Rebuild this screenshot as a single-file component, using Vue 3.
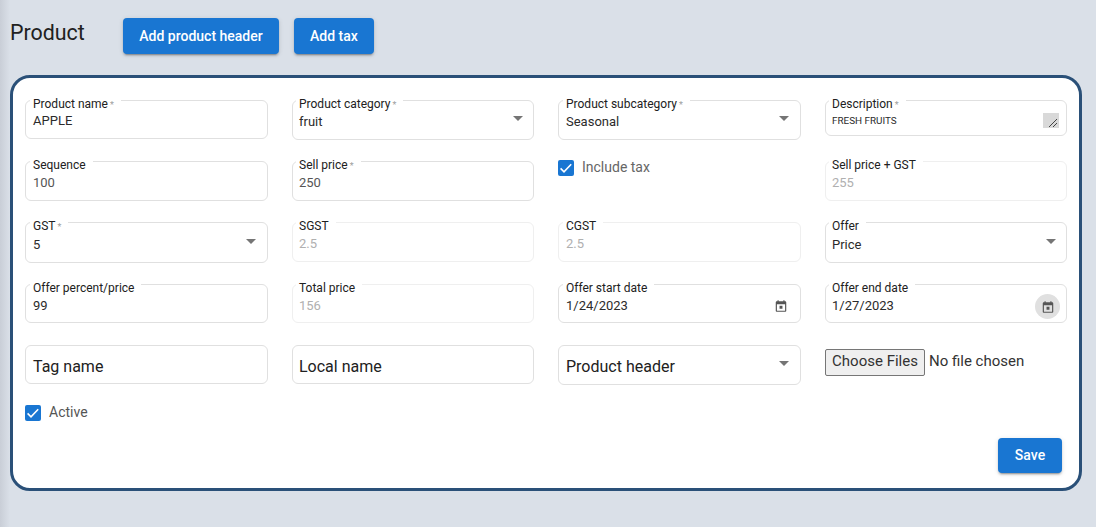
<template>
  <div class="page">
    <div class="left-shadow"></div>
    <div class="page-header">
      <h2 class="page-title">Product</h2>
      <button class="btn header-btn">Add product header</button>
      <button class="btn">Add tax</button>
    </div>

    <div class="form-card">
      <div class="form-grid">
        <template v-for="field in fields" :key="field.key">
          <label v-if="field.type === 'check'" class="check-row tax-row">
            <span class="check-box">
              <svg viewBox="0 0 16 16" width="16" height="16">
                <path d="M2.6 8.4l3.4 3.4 7.2-7.6" fill="none" stroke="#fff" stroke-width="1.6" />
              </svg>
            </span>
            <span class="check-text">{{ field.label }}</span>
          </label>

          <div v-else-if="field.type === 'file'" class="file-cell">
            <input class="file-input" type="file" multiple />
          </div>

          <div
            v-else
            class="field"
            :class="[field.size, { disabled: field.disabled, empty: !field.label }]"
          >
            <span v-if="field.label" class="field-label">
              {{ field.label }}<i v-if="field.required" class="req">*</i>
            </span>
            <span v-if="field.placeholder" class="placeholder">{{ field.placeholder }}</span>
            <span
              v-else
              class="value"
              :class="{ small: field.type === 'area', muted: field.muted, raised: field.raised }"
            >{{ field.value }}</span>

            <svg v-if="field.type === 'select'" class="arrow" viewBox="0 0 24 24" width="24" height="24">
              <path d="M7 10l5 5 5-5z" />
            </svg>

            <span v-if="field.type === 'area'" class="resizer">
              <svg viewBox="0 0 16 15" width="16" height="15">
                <path d="M6 14l8-8M10 14l4-4" stroke="#444" stroke-width="1" fill="none" />
              </svg>
            </span>

            <span v-if="field.type === 'date'" class="date-icon" :class="{ hovered: field.hovered }">
              <svg viewBox="0 0 24 24" width="14" height="14">
                <path d="M19 4h-1V2h-2v2H8V2H6v2H5c-1.1 0-2 .9-2 2v14c0 1.1.9 2 2 2h14c1.1 0 2-.9 2-2V6c0-1.1-.9-2-2-2zm0 16H5V9h14v11zM14.5 11.5h-5v5h5z" />
              </svg>
            </span>
          </div>
        </template>
      </div>

      <label class="check-row active-row">
        <span class="check-box">
          <svg viewBox="0 0 16 16" width="16" height="16">
            <path d="M2.6 8.4l3.4 3.4 7.2-7.6" fill="none" stroke="#fff" stroke-width="1.6" />
          </svg>
        </span>
        <span class="check-text">Active</span>
      </label>

      <div class="form-actions">
        <button class="btn save-btn">Save</button>
      </div>
    </div>
  </div>
</template>

<script setup>
const fields = [
  { key: 'name', label: 'Product name', required: true, value: 'APPLE', raised: true, size: 'h39' },
  { key: 'category', label: 'Product category', required: true, value: 'fruit', type: 'select', size: 'h40' },
  { key: 'sub', label: 'Product subcategory', required: true, value: 'Seasonal', type: 'select', size: 'h40' },
  { key: 'desc', label: 'Description', required: true, value: 'FRESH FRUITS', type: 'area', size: 'h36' },
  { key: 'seq', label: 'Sequence', value: '100', muted: true, size: 'h40' },
  { key: 'sell', label: 'Sell price', required: true, value: '250', muted: true, size: 'h40' },
  { key: 'tax', label: 'Include tax', type: 'check' },
  { key: 'gross', label: 'Sell price + GST', value: '255', disabled: true, size: 'h40' },
  { key: 'gst', label: 'GST', required: true, value: '5', type: 'select', size: 'h41' },
  { key: 'sgst', label: 'SGST', value: '2.5', disabled: true, size: 'h40' },
  { key: 'cgst', label: 'CGST', value: '2.5', disabled: true, size: 'h40' },
  { key: 'offer', label: 'Offer', value: 'Price', type: 'select', size: 'h41' },
  { key: 'pct', label: 'Offer percent/price', value: '99', size: 'h39' },
  { key: 'total', label: 'Total price', value: '156', disabled: true, size: 'h39' },
  { key: 'start', label: 'Offer start date', value: '1/24/2023', type: 'date', size: 'h39' },
  { key: 'end', label: 'Offer end date', value: '1/27/2023', type: 'date', hovered: true, size: 'h39' },
  { key: 'tag', placeholder: 'Tag name', size: 'h39' },
  { key: 'local', placeholder: 'Local name', size: 'h39' },
  { key: 'header', placeholder: 'Product header', type: 'select', size: 'h40' },
  { key: 'files', type: 'file' }
]
</script>

<style>
html, body {
  margin: 0;
  background: #dae0e8;
}
</style>

<style scoped>
.page {
  position: relative;
  height: 527px;
  overflow: hidden;
  background: #dae0e8;
  padding: 18px 14px 0 10px;
  box-sizing: border-box;
  font-family: Roboto, "Liberation Sans", sans-serif;
}

.left-shadow {
  position: absolute;
  left: 0;
  top: 0;
  bottom: 0;
  width: 10px;
  background: linear-gradient(to right, #c9ced7, #dae0e8);
}

.page-header {
  position: relative;
  display: flex;
  align-items: flex-start;
  gap: 15px;
  height: 36px;
}

.page-title {
  width: 98px;
  margin: 0;
  font-size: 21.4px;
  font-weight: 400;
  line-height: 30px;
  color: #212121;
}

.btn {
  height: 36px;
  min-width: 64px;
  padding: 0 16px;
  border: none;
  border-radius: 4px;
  background: #1976d2;
  color: #fff;
  font-family: inherit;
  font-size: 14px;
  font-weight: 500;
  box-shadow: 0 3px 1px -2px rgba(0, 0, 0, 0.2), 0 2px 2px rgba(0, 0, 0, 0.14), 0 1px 5px rgba(0, 0, 0, 0.12);
}

.header-btn {
  width: 156px;
  padding: 0;
}

.save-btn {
  height: 35px;
  padding-bottom: 1px;
}

.form-card {
  position: relative;
  height: 416px;
  box-sizing: border-box;
  margin-top: 21px;
  padding: 22px 12px 0;
  background: #fff;
  border: 3px solid #2a5078;
  border-radius: 20px;
}

.form-grid {
  --inset: 7px;
  display: grid;
  grid-template-columns: 243px 242px 243px 242px;
  grid-auto-rows: minmax(40px, auto);
  gap: 21px 24px;
  align-items: start;
}

/* 2nd and 4th columns sit half a pixel left in the original */
.form-grid > :nth-child(even) {
  --inset: 6px;
}

.field {
  position: relative;
  box-sizing: border-box;
  border: 1px solid #e0e0e0;
  border-radius: 6px;
}

.h36 { height: 36px; }
.h39 { height: 39px; }
.h40 { height: 40px; }
.h41 { height: 41px; }

.field.disabled {
  border-color: #efefef;
}

.field-label {
  position: absolute;
  left: calc(var(--inset) - 3px);
  top: -4px;
  padding: 0 7px 0 3px;
  background: #fff;
  font-size: 12px;
  line-height: 14px;
  color: #212121;
  white-space: nowrap;
}

.req {
  margin-left: 2px;
  font-style: normal;
  font-size: 9px;
  color: #9e9e9e;
}

.value {
  position: absolute;
  left: var(--inset);
  top: 13px;
  font-size: 13px;
  line-height: 16px;
  color: #2b2b2b;
}

.h41 .value {
  top: 14px;
}

.value.raised {
  top: 12px;
}

.value.muted {
  color: #555;
}

.field.disabled .value {
  color: #b0b0b0;
}

.value.small {
  top: 14px;
  font-size: 9.9px;
  line-height: 12px;
}

.placeholder {
  position: absolute;
  left: var(--inset);
  top: 11px;
  font-size: 16px;
  line-height: 20px;
  color: #212121;
}

.arrow {
  position: absolute;
  right: calc(var(--inset) - 3px);
  top: 5px;
  fill: #757575;
}

.h41 .arrow {
  top: 6px;
}

.resizer {
  position: absolute;
  right: 7px;
  top: 12px;
  width: 16px;
  height: 15px;
  background: #d9d9d9;
}

.resizer svg,
.check-box svg,
.date-icon svg {
  display: block;
}

.date-icon {
  position: absolute;
  right: 12px;
  top: 14px;
  fill: #555;
}

.date-icon.hovered {
  right: 6px;
  top: 9px;
  width: 25px;
  height: 25px;
  display: flex;
  align-items: center;
  justify-content: center;
  border-radius: 50%;
  background: #e0e0e0;
}

.check-row {
  display: flex;
  align-items: center;
  gap: 8px;
  font-size: 14px;
  line-height: 16px;
  color: #555;
}

.check-text {
  position: relative;
  top: -1px;
}

.tax-row {
  margin-top: -1px;
  color: #666;
}

.check-box {
  width: 16px;
  height: 16px;
  border-radius: 2px;
  background: #1976d2;
}

.active-row {
  margin-top: 20px;
}

.file-cell {
  padding-top: 4px;
}

.file-input {
  width: 100%;
  font-family: inherit;
  font-size: 15px;
  color: #333;
}

.file-input::file-selector-button {
  width: 100px;
  height: 27px;
  margin-right: 4px;
  padding: 0 0 4px;
  border: 1px solid #767676;
  border-radius: 2px;
  background: #efefef;
  color: #333;
  font-family: inherit;
  font-size: 15px;
}

.form-actions {
  display: flex;
  justify-content: flex-end;
  margin-top: 17px;
  padding-right: 5px;
}
</style>
